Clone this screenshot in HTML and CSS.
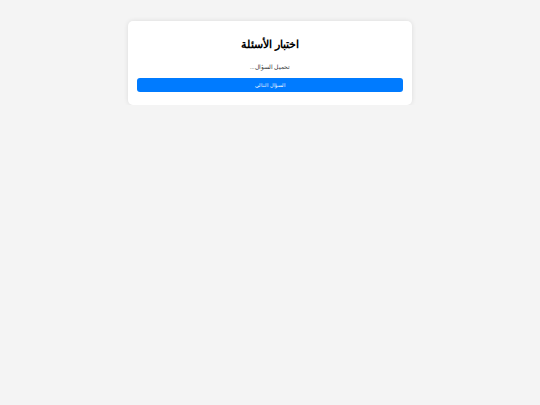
FILE: index.html
```html
<!DOCTYPE html>
<html lang="ar" dir="rtl">

<head>
    <meta charset="UTF-8">
    <meta name="viewport" content="width=device-width, initial-scale=1.0">
    <title>اختبار الأسئلة</title>
    <link rel="stylesheet" href="styles.css">
</head>

<body>
    <div class="quiz">
        <h1>اختبار الأسئلة</h1>
        <p id="question" class="question">تحميل السؤال...</p>
        <button id="next" class="btn">السؤال التالي</button>
    </div>
</body>

</html>
```

FILE: styles.css
```css
body {
    margin: 0;
    background-color: #f4f4f4;
    font-family: 'Liberation Sans', Arial, sans-serif;
}

.quiz {
    background-color: #fff;
    width: 284px;
    box-sizing: border-box;
    margin: 21px auto 0;
    padding: 17px 9px 13px;
    border-radius: 5px;
    box-shadow: 0 0 5px rgba(0, 0, 0, 0.1);
    text-align: center;
}

.quiz h1 {
    font-size: 11px;
    margin: 0 0 13px;
}

.question {
    font-size: 5.5px;
    color: #333;
    margin: 0 0 8px;
}

.btn {
    display: block;
    width: 100%;
    height: 14px;
    padding: 0;
    border: none;
    border-radius: 3px;
    background-color: #007bff;
    color: #fff;
    font-family: inherit;
    font-size: 4.5px;
    cursor: pointer;
}
```
